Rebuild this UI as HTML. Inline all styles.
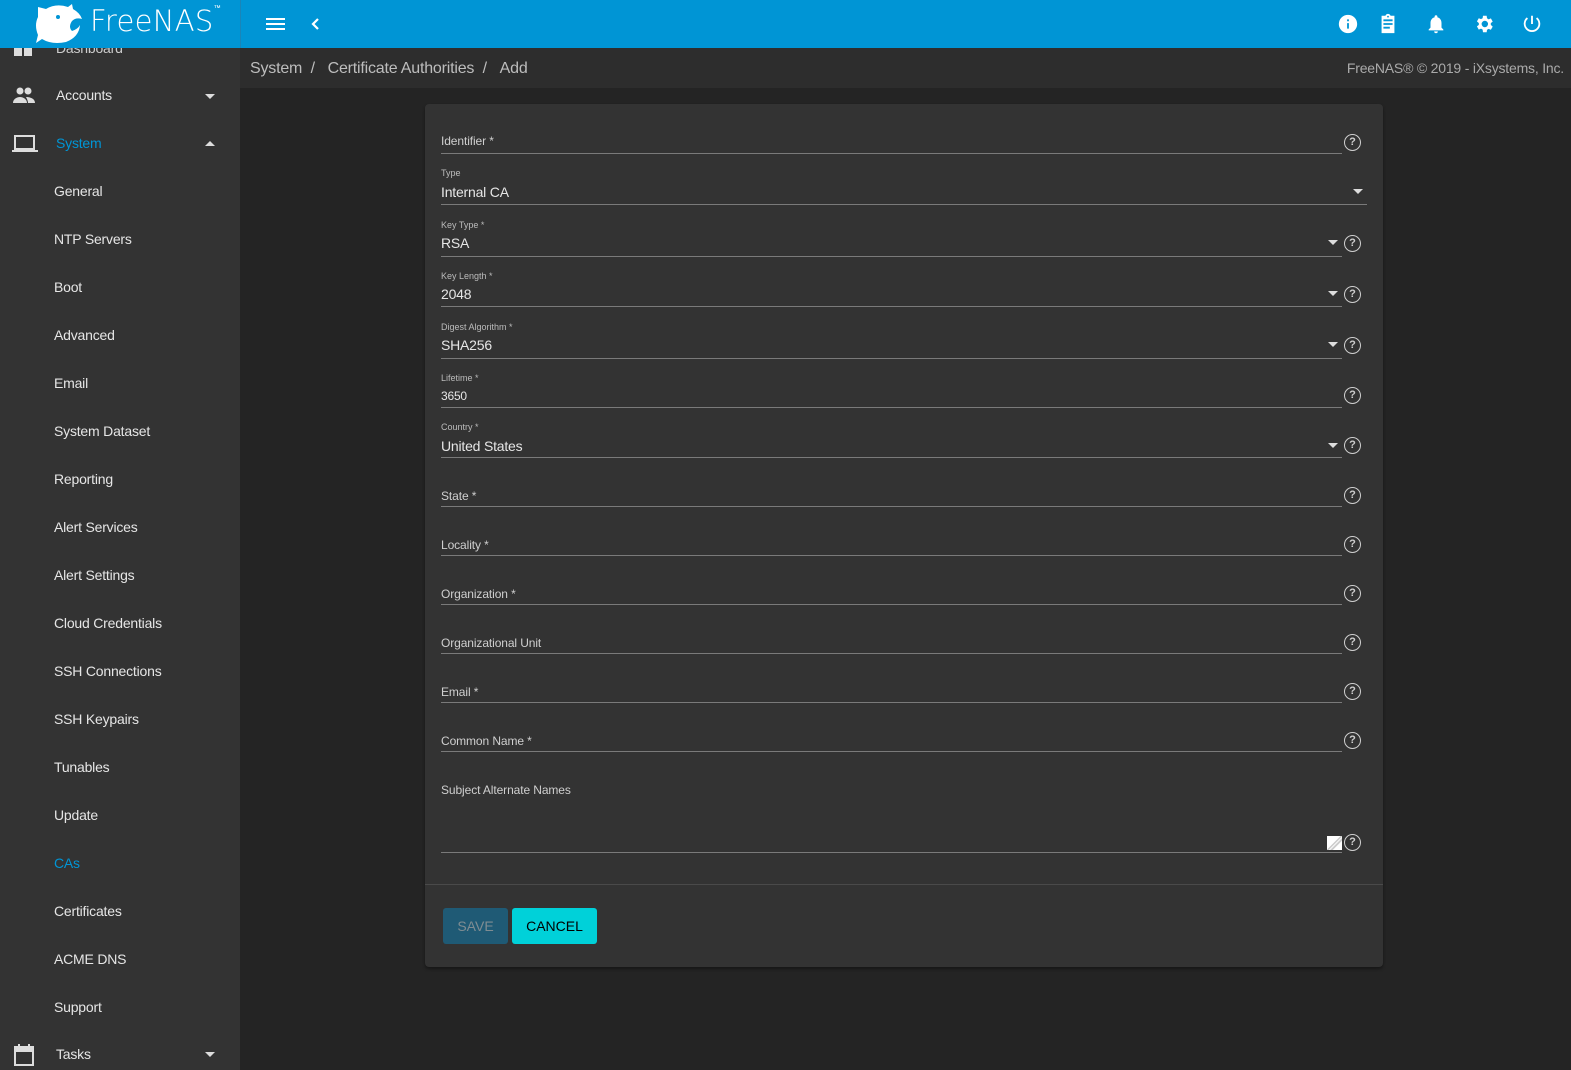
<!DOCTYPE html>
<html><head><meta charset="utf-8"><style>
*{box-sizing:border-box;margin:0;padding:0}
body{width:1571px;height:1070px;overflow:hidden;background:#242424;font-family:"Liberation Sans",sans-serif;position:relative;color:#e6e6e6}
.top{position:absolute;left:0;top:0;width:1571px;height:48px;background:#0095d5}
.side{position:absolute;left:0;top:48px;width:240px;height:1022px;background:#333}
.topside{position:absolute;left:240px;top:0;width:1px;height:48px;background:#1a85b8}
.crumb{position:absolute;left:240px;top:48px;width:1331px;height:40px;background:#2d2d2d;font-size:16px;color:#bdbdbd;letter-spacing:-0.2px}
.si{position:absolute;font-size:14px;color:#e6e6e6;letter-spacing:-0.2px}
.card{position:absolute;left:425px;top:104px;width:958px;height:863px;background:#333;border-radius:4px;box-shadow:0 2px 3px rgba(0,0,0,.4)}
.ln{position:absolute;left:441px;height:1px;background:#7a7a7a}
.lb{position:absolute;left:441px;font-size:12px;color:#cfcfcf;letter-spacing:-0.1px}
.sm{position:absolute;left:441px;font-size:9px;color:#bbb}
.v{position:absolute;left:441px;font-size:14px;color:#e6e6e6;letter-spacing:-0.2px}
.q{position:absolute;left:1344px;width:17px;height:17px;border:1.6px solid #cfcfcf;border-radius:50%;font-size:11px;font-weight:bold;color:#cfcfcf;text-align:center;line-height:14px}
.ar{position:absolute;width:0;height:0;border-left:5px solid transparent;border-right:5px solid transparent;border-top:5px solid #ddd}
</style></head><body>
<div class="top"></div>
<div class="topside"></div>
<div style="position:absolute;left:266px;top:18px;width:19px;height:2px;background:#fff;box-shadow:0 5px 0 #fff,0 10px 0 #fff"></div>
<svg style="position:absolute;left:309px;top:17px" width="12" height="14" viewBox="0 0 12 14"><path d="M9 2 L4 7 L9 12" fill="none" stroke="#fff" stroke-width="2.2"/></svg>
<svg style="position:absolute;left:1337px;top:13px" width="22" height="22" viewBox="0 0 24 24"><path fill="#fff" d="M12 2a10 10 0 100 20 10 10 0 000-20zm1 15h-2v-6h2zm0-8h-2V7h2z"/></svg>
<svg style="position:absolute;left:1377px;top:13px" width="22" height="22" viewBox="0 0 24 24"><path fill="#fff" d="M19 3h-4.2C14.4 1.8 13.3 1 12 1s-2.4.8-2.8 2H5v19h14zM12 3a1 1 0 110 2 1 1 0 010-2zm2 14H7v-2h7zm3-4H7v-2h10zm0-4H7V7h10z"/></svg>
<svg style="position:absolute;left:1425px;top:13px" width="22" height="22" viewBox="0 0 24 24"><path fill="#fff" d="M12 22a2 2 0 002-2h-4a2 2 0 002 2zm6-6v-5c0-3-1.6-5.6-4.5-6.3V4a1.5 1.5 0 00-3 0v.7C7.6 5.4 6 8 6 11v5l-2 2v1h16v-1z"/></svg>
<svg style="position:absolute;left:1473px;top:13px" width="22" height="22" viewBox="0 0 24 24"><path fill="#fff" d="M19.4 13a7.5 7.5 0 000-2l2.1-1.6-2-3.5-2.5 1a7 7 0 00-1.7-1L14.9 3h-4l-.4 2.7a7 7 0 00-1.7 1l-2.5-1-2 3.5L6.4 11a7.5 7.5 0 000 2l-2.1 1.6 2 3.5 2.5-1a7 7 0 001.7 1l.4 2.9h4l.4-2.7a7 7 0 001.7-1l2.5 1 2-3.5zM12.9 15.5a3.5 3.5 0 110-7 3.5 3.5 0 010 7z"/></svg>
<svg style="position:absolute;left:1521px;top:13px" width="22" height="22" viewBox="0 0 24 24"><path fill="none" stroke="#fff" stroke-width="2" d="M12 3v9M7 5.5a8 8 0 1010 0"/></svg>
<div class="side"></div>
<svg style="position:absolute;left:14px;top:38px" width="20" height="20" viewBox="0 0 20 20"><rect x="0" y="8" width="8" height="10" fill="#ddd"/><rect x="10" y="0" width="8" height="18" fill="#ddd"/><rect x="0" y="0" width="8" height="6" fill="#ddd"/></svg>
<div class="si" style="left:56px;top:40px;color:#ccc">Dashboard</div>
<div class="top" style="height:48px;width:240px"></div>
<svg style="position:absolute;left:34px;top:3px" width="52" height="42" viewBox="0 0 52 42"><path d="M4 4 L12 6 Q22 0 34 4 L38 1 L39 6 Q46 10 48 16 Q42 14 38 18 Q34 24 38 28 Q44 26 46 22 Q45 34 32 39 Q18 42 8 36 L2 40 L4 32 Q0 22 4 14 Z" fill="#fff"/><circle cx="24" cy="14" r="2" fill="#0095d5"/></svg>
<div style="position:absolute;left:90px;top:4px;font-size:29px;color:#fff;font-family:'DejaVu Sans','Liberation Sans',sans-serif;font-weight:200;letter-spacing:0.3px">FreeNAS<span style="font-size:7px;vertical-align:top">™</span></div>
<svg style="position:absolute;left:12px;top:86px" width="24" height="20" viewBox="0 0 24 20"><circle cx="8" cy="5" r="3.5" fill="#ddd"/><circle cx="16" cy="5" r="3.5" fill="#ddd"/><path d="M1 17c0-4 4-6 7-6s7 2 7 6zM14 11c3 0 9 1 9 6h-7c0-2-1-4-2-6z" fill="#ddd"/></svg>
<div class="si" style="left:56px;top:87px">Accounts</div><div class="ar" style="left:205px;top:94px"></div>
<svg style="position:absolute;left:12px;top:134px" width="26" height="20" viewBox="0 0 26 20"><rect x="3" y="2" width="19" height="13" fill="none" stroke="#ddd" stroke-width="2"/><rect x="0" y="16" width="26" height="2" fill="#ddd"/></svg>
<div class="si" style="left:56px;top:135px;color:#0095d5">System</div><div class="ar" style="left:205px;top:141px;border-top:0;border-bottom:5px solid #ddd"></div>
<div class="si" style="left:54px;top:183px">General</div>
<div class="si" style="left:54px;top:231px">NTP Servers</div>
<div class="si" style="left:54px;top:279px">Boot</div>
<div class="si" style="left:54px;top:327px">Advanced</div>
<div class="si" style="left:54px;top:375px">Email</div>
<div class="si" style="left:54px;top:423px">System Dataset</div>
<div class="si" style="left:54px;top:471px">Reporting</div>
<div class="si" style="left:54px;top:519px">Alert Services</div>
<div class="si" style="left:54px;top:567px">Alert Settings</div>
<div class="si" style="left:54px;top:615px">Cloud Credentials</div>
<div class="si" style="left:54px;top:663px">SSH Connections</div>
<div class="si" style="left:54px;top:711px">SSH Keypairs</div>
<div class="si" style="left:54px;top:759px">Tunables</div>
<div class="si" style="left:54px;top:807px">Update</div>
<div class="si" style="left:54px;top:855px;color:#0095d5">CAs</div>
<div class="si" style="left:54px;top:903px">Certificates</div>
<div class="si" style="left:54px;top:951px">ACME DNS</div>
<div class="si" style="left:54px;top:999px">Support</div>
<svg style="position:absolute;left:14px;top:1044px" width="20" height="22" viewBox="0 0 20 22"><rect x="1" y="3" width="18" height="18" fill="none" stroke="#ddd" stroke-width="2"/><rect x="1" y="3" width="18" height="5" fill="#ddd"/><rect x="4" y="0" width="2" height="4" fill="#ddd"/><rect x="14" y="0" width="2" height="4" fill="#ddd"/></svg>
<div class="si" style="left:56px;top:1046px">Tasks</div><div class="ar" style="left:205px;top:1052px"></div>
<div class="crumb"><span style="position:absolute;left:10px;top:12px">System &nbsp;/ &nbsp;&nbsp;Certificate Authorities &nbsp;/ &nbsp;&nbsp;Add</span><span style="position:absolute;right:7px;top:12px;font-size:14px;color:#aaa">FreeNAS® © 2019 - iXsystems, Inc.</span></div>
<div class="card"></div>
<div class="lb" style="top:134px">Identifier *</div><div class="ln" style="top:153px;width:901px"></div><div class="q" style="top:134px">?</div>
<div class="sm" style="top:168px">Type</div><div class="v" style="top:184px">Internal CA</div><div class="ln" style="top:204px;width:926px"></div><div class="ar" style="left:1353px;top:189px"></div>
<div class="sm" style="top:220px">Key Type *</div><div class="v" style="top:235px">RSA</div><div class="ln" style="top:256px;width:901px"></div><div class="ar" style="left:1328px;top:240px"></div><div class="q" style="top:235px">?</div>
<div class="sm" style="top:271px">Key Length *</div><div class="v" style="top:286px">2048</div><div class="ln" style="top:306px;width:901px"></div><div class="ar" style="left:1328px;top:291px"></div><div class="q" style="top:286px">?</div>
<div class="sm" style="top:322px">Digest Algorithm *</div><div class="v" style="top:337px">SHA256</div><div class="ln" style="top:358px;width:901px"></div><div class="ar" style="left:1328px;top:342px"></div><div class="q" style="top:337px">?</div>
<div class="sm" style="top:373px">Lifetime *</div><div class="v" style="top:389px;font-size:12px">3650</div><div class="ln" style="top:407px;width:901px"></div><div class="q" style="top:387px">?</div>
<div class="sm" style="top:422px">Country *</div><div class="v" style="top:438px">United States</div><div class="ln" style="top:457px;width:901px"></div><div class="ar" style="left:1328px;top:443px"></div><div class="q" style="top:437px">?</div>
<div class="lb" style="top:489px">State *</div><div class="ln" style="top:506px;width:901px"></div><div class="q" style="top:487px">?</div>
<div class="lb" style="top:538px">Locality *</div><div class="ln" style="top:555px;width:901px"></div><div class="q" style="top:536px">?</div>
<div class="lb" style="top:587px">Organization *</div><div class="ln" style="top:604px;width:901px"></div><div class="q" style="top:585px">?</div>
<div class="lb" style="top:636px">Organizational Unit</div><div class="ln" style="top:653px;width:901px"></div><div class="q" style="top:634px">?</div>
<div class="lb" style="top:685px">Email *</div><div class="ln" style="top:702px;width:901px"></div><div class="q" style="top:683px">?</div>
<div class="lb" style="top:734px">Common Name *</div><div class="ln" style="top:751px;width:901px"></div><div class="q" style="top:732px">?</div>
<div class="lb" style="top:783px">Subject Alternate Names</div><div class="ln" style="top:852px;width:901px"></div><div class="q" style="top:834px">?</div>
<div style="position:absolute;left:1327px;top:836px;width:15px;height:14px;background:linear-gradient(135deg,#fff 45%,#bbb 50%,#fff 56%,#bbb 64%,#fff 70%)"></div>
<div style="position:absolute;left:425px;top:884px;width:958px;height:1px;background:#4a4a4a"></div>
<div style="position:absolute;left:443px;top:908px;width:65px;height:36px;background:#1f5a75;border-radius:3px;color:#7f8c92;font-size:14px;text-align:center;line-height:36px">SAVE</div>
<div style="position:absolute;left:512px;top:908px;width:85px;height:36px;background:#00d1d9;border-radius:3px;color:#000;font-size:14px;text-align:center;line-height:36px">CANCEL</div>
</body></html>
